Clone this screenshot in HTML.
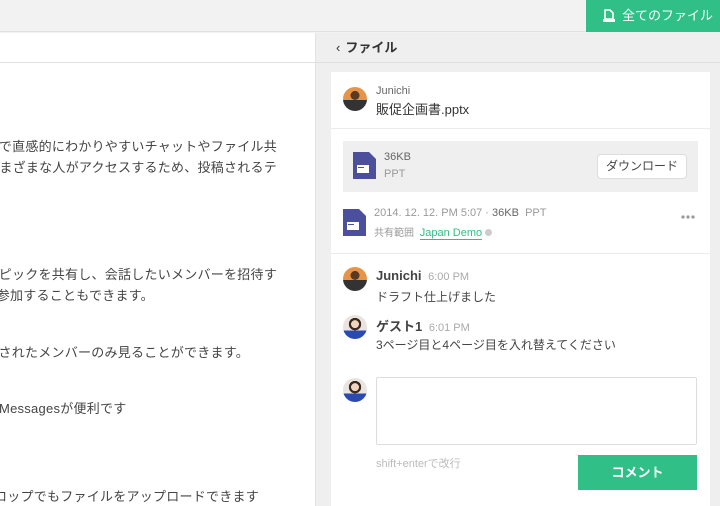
<!DOCTYPE html>
<html><head><meta charset="utf-8"><style>
*{margin:0;padding:0;box-sizing:border-box}
body{width:720px;height:506px;overflow:hidden;background:#f2f2f2;font-family:"Liberation Sans","Noto Sans CJK JP",sans-serif;color:#333;position:relative}
.a{position:absolute;white-space:nowrap}
#top{position:absolute;left:0;top:0;width:720px;height:32px;background:#f2f2f2;border-bottom:1px solid #e0e0e0}
#btn{position:absolute;left:586px;top:0;width:134px;height:32px;background:#2fbf87;color:#fff;font-size:13px;line-height:32px}
#left{position:absolute;left:0;top:33px;width:316px;height:473px;background:#fff;border-right:1px solid #e2e2e2;overflow:hidden}
#left .hd{height:30px;border-bottom:1px solid #e2e2e2}
#left .a{font-size:13px;color:#444;right:38px;letter-spacing:0.25px}
#right{position:absolute;left:316px;top:33px;width:404px;height:473px;background:#efefef}
#rhd{height:30px;border-bottom:1px solid #dedede;font-size:13px;font-weight:bold;line-height:30px;padding-left:20px;color:#333}
#card{position:absolute;left:15px;top:39px;width:379px;height:434px;background:#fff}
.av{position:absolute;width:24px;height:24px;border-radius:50%;overflow:hidden}
.av1{background:radial-gradient(circle at 50% 35%,#5a3a25 0 22%,transparent 23%),linear-gradient(180deg,#e89448 0 55%,#333 55%)}
.av2{background:radial-gradient(circle at 50% 38%,#f1d4bf 0 20%,#3a2a20 21% 32%,transparent 33%),linear-gradient(180deg,#e9e4df 0 65%,#2a4ab0 65%)}
.doc{position:absolute;width:23px;height:27px}
</style></head><body>
<div id="top"></div>
<div id="btn"><svg class="a" style="left:17px;top:9px" width="12" height="14" viewBox="0 0 12 14"><path d="M2 1h5l3 3v6H2z" fill="none" stroke="#fff" stroke-width="1.6"/><path d="M0 10h12v3H0z" fill="#fff"/></svg><span class="a" style="left:36px;top:0">全てのファイル</span></div>
<div id="left"><div class="hd"></div>
<div class="a" style="top:103px">どのチームでも簡単で直感的にわかりやすいチャットやファイル共</div>
<div class="a" style="top:124px">社内外を問わずさまざまな人がアクセスするため、投稿されるテ</div>
<div class="a" style="top:231px">パブリックトピックを共有し、会話したいメンバーを招待す</div>
<div class="a" style="top:252px;right:auto;left:-43px">自由に参加することもできます。</div>
<div class="a" style="top:309px;right:auto;left:-28px">招待されたメンバーのみ見ることができます。</div>
<div class="a" style="top:365px;right:auto;left:-1px">Messagesが便利です</div>
<div class="a" style="top:453px;right:auto;left:-6px">ロップでもファイルをアップロードできます</div>
</div>
<div id="right">
<div id="rhd"><span style="font-weight:normal;margin-right:5px">‹</span>ファイル</div>
<div id="card">
<div class="av av1" style="left:12px;top:15px"></div>
<div class="a" style="left:45px;top:13px;font-size:11px;color:#666">Junichi</div>
<div class="a" style="left:45px;top:27px;font-size:13px;color:#333">販促企画書.pptx</div>
<div class="a" style="left:0;top:56px;width:379px;border-top:1px solid #ececec"></div>
<div class="a" style="left:12px;top:69px;width:355px;height:51px;background:#efefef"></div>
<svg class="doc" style="left:22px;top:80px" viewBox="0 0 23 27"><path d="M0 0h16l7 7v20H0z" fill="#4b4f9c"/><path d="M4 13h12v8H4z" fill="#fff"/><path d="M5 15h6v1H5z" fill="#4b4f9c"/></svg>
<div class="a" style="left:53px;top:79px;font-size:11px;color:#666">36KB</div>
<div class="a" style="left:53px;top:96px;font-size:11px;color:#999">PPT</div>
<div class="a" style="left:266px;top:82px;width:90px;height:25px;background:#fff;border:1px solid #ddd;border-radius:4px;font-size:12px;line-height:23px;text-align:center;color:#444">ダウンロード</div>
<svg class="doc" style="left:12px;top:137px" viewBox="0 0 23 27"><path d="M0 0h16l7 7v20H0z" fill="#4b4f9c"/><path d="M4 13h12v8H4z" fill="#fff"/><path d="M5 15h6v1H5z" fill="#4b4f9c"/></svg>
<div class="a" style="left:43px;top:135px;font-size:11px;color:#999">2014. 12. 12. PM 5:07 · <span style="color:#666">36KB</span>&nbsp; PPT</div>
<div class="a" style="left:43px;top:152px;font-size:10px;color:#999">共有範囲 <span style="color:#2fbf87;font-size:11px;border-bottom:1px solid #2fbf87;margin-left:3px">Japan Demo</span> <span style="display:inline-block;width:7px;height:7px;border-radius:50%;background:#ccc"></span></div>
<svg class="a" style="left:350px;top:143px" width="14" height="4"><circle cx="2" cy="2" r="1.6" fill="#999"/><circle cx="7" cy="2" r="1.6" fill="#999"/><circle cx="12" cy="2" r="1.6" fill="#999"/></svg>
<div class="a" style="left:0;top:181px;width:379px;border-top:1px solid #ececec"></div>
<div class="av av1" style="left:12px;top:195px"></div>
<div class="a" style="left:45px;top:196px;font-size:13px;font-weight:bold;color:#444">Junichi <span style="font-weight:normal;font-size:11px;color:#aaa;margin-left:3px">6:00 PM</span></div>
<div class="a" style="left:45px;top:216px;font-size:12px;color:#444">ドラフト仕上げました</div>
<div class="av av2" style="left:12px;top:243px"></div>
<div class="a" style="left:45px;top:244px;font-size:13px;font-weight:bold;color:#444">ゲスト1 <span style="font-weight:normal;font-size:11px;color:#aaa;margin-left:3px">6:01 PM</span></div>
<div class="a" style="left:45px;top:264px;font-size:12px;color:#444">3ページ目と4ページ目を入れ替えてください</div>
<div class="av av2" style="left:12px;top:306px"></div>
<div class="a" style="left:45px;top:305px;width:321px;height:68px;border:1px solid #ddd;border-radius:2px"></div>
<div class="a" style="left:45px;top:383px;font-size:11px;color:#bbb">shift+enterで改行</div>
<div class="a" style="left:247px;top:383px;width:119px;height:35px;background:#2fbf87;color:#fff;font-size:13px;font-weight:bold;line-height:35px;text-align:center">コメント</div>
</div></div>
</body></html>
